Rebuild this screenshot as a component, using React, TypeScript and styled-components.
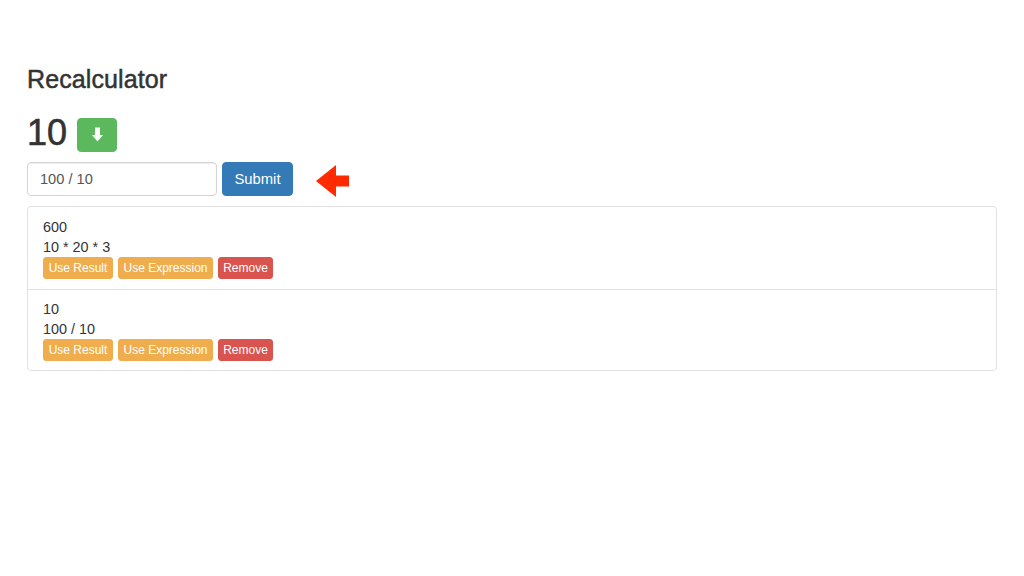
import React from "react";
import styled, { createGlobalStyle } from "styled-components";

const GlobalStyle = createGlobalStyle`
  html, body {
    margin: 0;
    padding: 0;
    background: #fff;
  }
  body {
    font-family: "Liberation Sans", Arial, sans-serif;
    font-size: 14px;
    line-height: 20px;
    color: #333;
  }
`;

const Page = styled.div`
  padding: 66px 27px 0;
`;

const Title = styled.h1`
  margin: 0 0 22px;
  font-size: 25px;
  line-height: 26px;
  font-weight: 500;
  letter-spacing: 0.1px;
  color: #333;
  -webkit-text-stroke: 0.5px #333;
`;

const ResultRow = styled.div`
  display: flex;
  align-items: center;
  gap: 10px;
  height: 40px;
  margin-bottom: 8px;
`;

const ResultValue = styled.span`
  margin-bottom: 2px;
  font-size: 36px;
  line-height: 40px;
  font-weight: 500;
  -webkit-text-stroke: 0.6px #333;
`;

const Button = styled.button<{ $bg: string }>`
  box-sizing: border-box;
  display: inline-flex;
  align-items: center;
  justify-content: center;
  padding: 0;
  font-family: inherit;
  color: #fff;
  background: ${(p) => p.$bg};
  border: 1px solid ${(p) => p.$bg};
`;

const DownButton = styled(Button)`
  width: 40px;
  height: 34px;
  margin-top: 2px;
  border-radius: 4px;
`;

const DownIcon = styled.svg`
  margin-bottom: 1px;
`;

const SubmitButton = styled(Button)`
  width: 71px;
  height: 34px;
  font-size: 14.8px;
  border-radius: 4px;
`;

const SmallButton = styled(Button)<{ $width: number }>`
  width: ${(p) => p.$width}px;
  height: 22px;
  font-size: 12px;
  border-radius: 3px;
`;

const FormRow = styled.form`
  display: flex;
  align-items: center;
  height: 34px;
  margin: 0 0 10px;
`;

const Input = styled.input`
  box-sizing: border-box;
  width: 190px;
  height: 34px;
  margin-right: 5px;
  padding: 0 12px;
  font-family: inherit;
  font-size: 14.6px;
  color: #555;
  background: #fff;
  border: 1px solid #d4d4d4;
  border-radius: 4px;
  box-shadow: inset 0 1px 1px rgba(0, 0, 0, 0.075);
`;

const Arrow = styled.svg`
  margin-left: 23px;
  margin-top: 3px;
`;

const List = styled.ul`
  margin: 0;
  padding: 0;
  list-style: none;
  border: 1px solid #e2e2e2;
  border-radius: 4px;
`;

const Item = styled.li`
  box-sizing: border-box;
  height: 82px;
  padding: 10px 15px;
  & + & {
    border-top: 1px solid #e2e2e2;
    height: 81px;
    padding-top: 9px;
  }
`;

const Line = styled.div`
  font-size: 14.4px;
  line-height: 20px;
`;

const Actions = styled.div`
  display: flex;
  gap: 5px;
`;

const history = [
  { result: "600", expression: "10 * 20 * 3" },
  { result: "10", expression: "100 / 10" },
];

const App = () => (
  <Page>
    <GlobalStyle />
    <Title>Recalculator</Title>
    <ResultRow>
      <ResultValue>10</ResultValue>
      <DownButton type="button" $bg="#5cb85c" aria-label="Use result">
        <DownIcon width="11" height="15" viewBox="0 0 11 15">
          <path d="M3 0.5h5v7.5h3L5.5 14.5 0 8h3z" fill="#fff" />
        </DownIcon>
      </DownButton>
    </ResultRow>
    <FormRow onSubmit={(e) => e.preventDefault()}>
      <Input defaultValue="100 / 10" />
      <SubmitButton type="submit" $bg="#337ab7">
        Submit
      </SubmitButton>
      <Arrow width="33" height="32" viewBox="0 0 33 32">
        <path d="M0 16L20 0v10.5h13v11H20V32z" fill="#ff2a00" />
      </Arrow>
    </FormRow>
    <List>
      {history.map((entry) => (
        <Item key={entry.result}>
          <Line>{entry.result}</Line>
          <Line>{entry.expression}</Line>
          <Actions>
            <SmallButton type="button" $width={70} $bg="#f0ad4e">
              Use Result
            </SmallButton>
            <SmallButton type="button" $width={95} $bg="#f0ad4e">
              Use Expression
            </SmallButton>
            <SmallButton type="button" $width={55} $bg="#d9534f">
              Remove
            </SmallButton>
          </Actions>
        </Item>
      ))}
    </List>
  </Page>
);

export default App;
